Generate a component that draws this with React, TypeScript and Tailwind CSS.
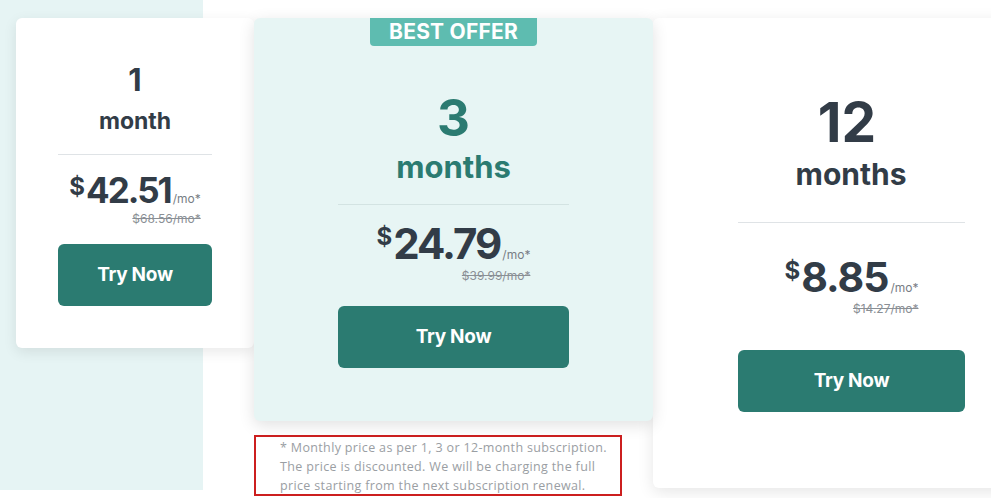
import React from "react";

type Plan = {
  count: string;
  unit: string;
  price: string;
  old: string;
};

const ink = "text-[#323c47]";

function Price({ price, old, big }: { price: string; old: string; big: string }) {
  return (
    <div className="flex flex-col items-end">
      <div className={`flex items-baseline font-bold ${ink}`}>
        <span className="self-start text-[24px] leading-none mt-[2px] mr-[1px]">$</span>
        <span className={`${big} leading-none`}>{price}</span>
        <span className="text-[12px] font-normal text-[#777d84] ml-[2px]">/mo*</span>
      </div>
      <span className="text-[12px] line-through text-[#8a8f95] mt-[5px] leading-none">{old}</span>
    </div>
  );
}

function TryNow() {
  return (
    <button className="w-full h-[62px] rounded-[6px] bg-[#2b7b71] text-white text-[19px] font-bold tracking-[-0.3px]">
      Try Now
    </button>
  );
}

export default function App() {
  const one: Plan = { count: "1", unit: "month", price: "42.51", old: "$68.56/mo*" };
  const three: Plan = { count: "3", unit: "months", price: "24.79", old: "$39.99/mo*" };
  const twelve: Plan = { count: "12", unit: "months", price: "8.85", old: "$14.27/mo*" };

  return (
    <div
      className="w-[991px] h-[498px] overflow-hidden bg-white bg-[linear-gradient(#e6f4f4,#e6f4f4)] bg-[length:203px_490px] bg-no-repeat flex items-start pt-[18px] pl-[16px]"
      style={{ fontFamily: "Inter, 'Liberation Sans', sans-serif" }}
    >
      {/* 1 month */}
      <div className="w-[238px] h-[330px] shrink-0 bg-white rounded-[6px] shadow-[0_4px_14px_rgba(0,0,0,0.09)] px-[42px] pt-[44px] flex flex-col items-center">
        <div className={`text-[31px] leading-[36px] font-bold ${ink}`}>{one.count}</div>
        <div className={`text-[23px] leading-[30px] font-bold mt-[8px] ${ink}`}>{one.unit}</div>
        <div className="w-full h-px bg-[#dfe3e6] mt-[18px]" />
        <div className="mt-[18px]">
          <Price price={one.price} old={one.old} big="text-[35px] tracking-[-2px]" />
        </div>
        <div className="w-full mt-[19px]">
          <TryNow />
        </div>
      </div>

      {/* 3 months */}
      <div className="w-[399px] shrink-0 flex flex-col">
        <div className="relative w-full h-[403px] bg-[#e7f5f4] rounded-[6px] shadow-[0_4px_16px_rgba(0,0,0,0.12)] px-[84px] pt-[72px] flex flex-col items-center">
          <div className="absolute top-0 left-[116px] w-[167px] h-[28px] rounded-b-[4px] bg-[#5ebcb0] text-white text-[21px] font-bold leading-[28px] text-center tracking-[0.2px]">
            BEST OFFER
          </div>
          <div className="text-[51px] leading-[56px] font-bold text-[#2b7b71]">{three.count}</div>
          <div className="text-[31px] leading-[36px] font-bold text-[#2b7b71] mt-[3px]">{three.unit}</div>
          <div className="w-full h-px bg-[#d3e3e2] mt-[19px]" />
          <div className="mt-[18px]">
            <Price price={three.price} old={three.old} big="text-[42px] tracking-[-2px]" />
          </div>
          <div className="w-full mt-[24px]">
            <TryNow />
          </div>
        </div>
        <div
          className="w-[368px] h-[61px] mt-[14px] border-2 border-[#cc1f1f] pl-[24px] pr-[8px] pt-[1px] text-[12.5px] leading-[19px] text-[#9a9ea3] tracking-[0.35px]"
          style={{ fontFamily: "'Open Sans', 'Liberation Sans', sans-serif" }}
        >
          * Monthly price as per 1, 3 or 12-month subscription. The price is discounted. We will be charging the full price starting from the next subscription renewal.
        </div>
      </div>

      {/* 12 months */}
      <div className="w-[396px] h-[470px] shrink-0 bg-white rounded-[6px] shadow-[0_4px_16px_rgba(0,0,0,0.1)] px-[85px] pt-[74px] flex flex-col items-center">
        <div className={`text-[55px] leading-[60px] font-bold ${ink} -ml-[8px]`}>{twelve.count}</div>
        <div className={`text-[30px] leading-[36px] font-bold ${ink} mt-[4px]`}>{twelve.unit}</div>
        <div className="w-[227px] self-start h-px bg-[#dfe3e6] mt-[30px]" />
        <div className="mt-[34px] self-start w-[227px] flex justify-center">
          <Price price={twelve.price} old={twelve.old} big="text-[41px] tracking-[-1px]" />
        </div>
        <div className="w-[227px] self-start mt-[35px]">
          <TryNow />
        </div>
      </div>
    </div>
  );
}
